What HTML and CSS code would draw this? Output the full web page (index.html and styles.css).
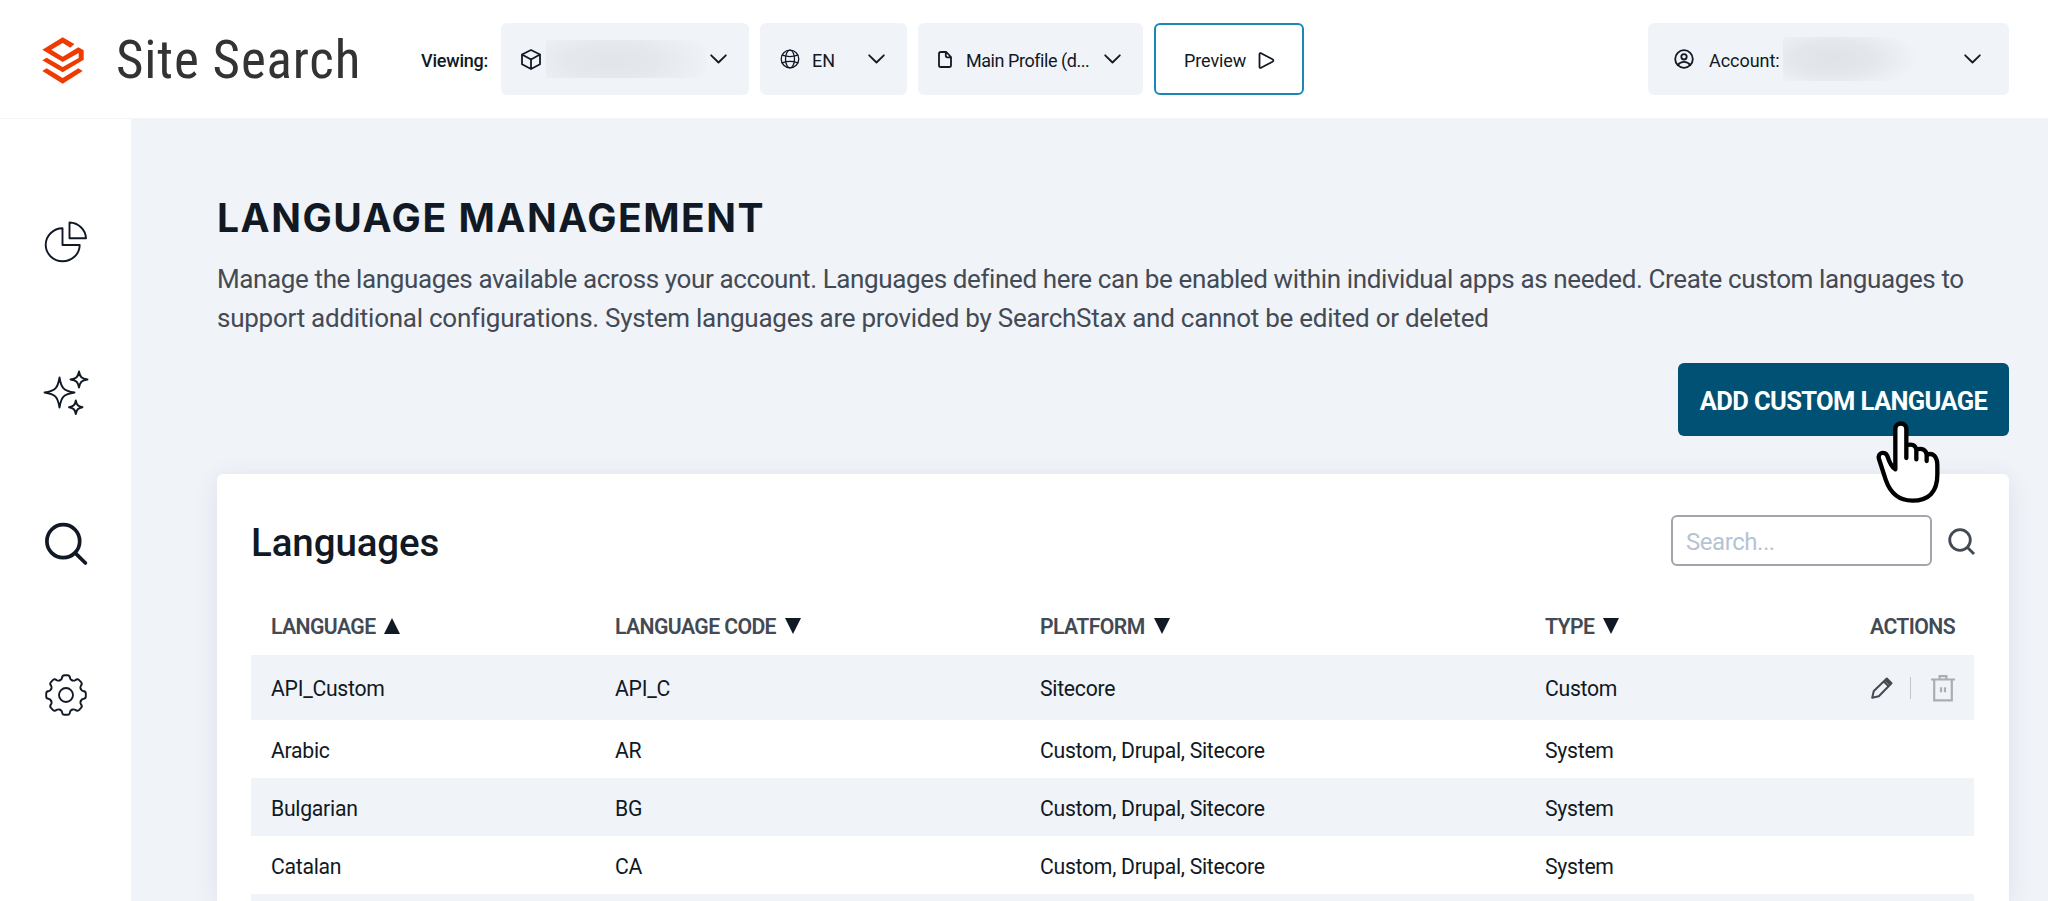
FILE: index.html
```html
<!DOCTYPE html>
<html lang="en">
<head>
<meta charset="utf-8">
<title>Site Search – Language Management</title>
<link rel="stylesheet" href="styles.css">
</head>
<body>
<header class="topbar">
  <svg class="logo" width="42" height="47" viewBox="126 112 126 141" fill="#ee3a03">
    <path d="M127 150 188 113 223 133 211 144 188 130 154 150 188 171 235 143 251 152V180L188 218 127 182 140 174 188 202 236 175V160L188 187Z"/>
    <path d="M127 214 140 206 188 235 235 206 248 214 188 252Z"/>
  </svg>
  <div class="brand">Site Search</div>
  <div class="viewing">Viewing:</div>
  <div class="controls">
    <div class="select select-app">
      <svg width="20" height="21" viewBox="0 0 20 21" class="ico"><path d="M10 1 19 5.500V15.200L10 20 1 15.200V5.500ZM1 5.500 10 10.500 19 5.500M10 10.500V20"/></svg>
      <span class="redacted redacted-app"></span>
      <svg class="chevron ico" width="17" height="10" viewBox="0 0 17 10"><path d="M1.200 1.300 8.500 8.500 15.800 1.300"/></svg>
    </div>
    <div class="select select-lang">
      <svg width="20" height="20" viewBox="0 0 20 20" class="ico thin"><circle cx="10" cy="10" r="8.800"/><ellipse cx="10" cy="10" rx="4.500" ry="8.800"/><path d="M2.200 6.200Q10 9 17.800 6.200M2.200 13.800Q10 11 17.800 13.800"/></svg>
      <span class="select-text">EN</span>
      <svg class="chevron ico" width="17" height="10" viewBox="0 0 17 10"><path d="M1.200 1.300 8.500 8.500 15.800 1.300"/></svg>
    </div>
    <div class="select select-profile">
      <svg width="14" height="17" viewBox="0 0 14 17" class="ico"><path d="M3 1H8.300L13 6V14.200Q13 16 11.200 16H2.800Q1 16 1 14.200V2.800Q1 1 3 1ZM7.800 1.200V4.800Q7.800 6.300 9.300 6.300H12.800"/></svg>
      <span class="select-text profile-text">Main Profile (d...</span>
      <svg class="chevron ico" width="17" height="10" viewBox="0 0 17 10"><path d="M1.200 1.300 8.500 8.500 15.800 1.300"/></svg>
    </div>
    <button class="preview">
      <span>Preview</span>
      <svg width="17" height="17" viewBox="0 0 17 17" class="ico"><path d="M1.500 2.200Q1.500.700 3 1.200L14.500 7.300Q16.300 8.500 14.500 9.700L3 15.800Q1.500 16.300 1.500 14.800Z"/></svg>
    </button>
  </div>
  <div class="select select-account">
    <svg width="20" height="20" viewBox="0 0 20 20" class="ico"><circle cx="10" cy="10" r="8.800"/><circle cx="10" cy="7.800" r="2.700"/><path d="M3.800 16Q6 12.800 10 12.800T16.200 16"/></svg>
    <span class="select-text">Account:</span>
    <span class="redacted redacted-account"></span>
    <svg class="chevron ico" width="17" height="10" viewBox="0 0 17 10"><path d="M1.200 1.300 8.500 8.500 15.800 1.300"/></svg>
  </div>
</header>
<div class="shell">
  <nav class="sidebar">
    <svg width="46" height="46" viewBox="-23 -23 46 46" class="nav-ico"><path d="M-3.500-13.700V3H13.700A17 16.500 0 1 1-3.500-13.700ZM3.500-19.500A17 16.500 0 0 1 20-3.700H3.500Z"/></svg>
    <svg width="46" height="46" viewBox="-23 -23 46 46" class="nav-ico"><path d="M-6.500-15.500C-4.800-5-2.500-2 8.500-.500C-2.500 1-4.800 4-6.500 14.500C-8.200 4-10.500 1-21.500-.500C-10.500-2-8.200-5-6.500-15.500Z"/><path d="M13-21.500C14-16 15.500-14.500 21.500-13.500C15.500-12.500 14-11 13-5.500C12-11 10.500-12.500 4.500-13.500C10.500-14.500 12-16 13-21.500Z"/><path d="M9.800 7.500C10.600 12 12 13.500 16.500 14.200C12 15 10.600 16.500 9.800 21C9 16.500 7.600 15 3 14.200C7.600 13.500 9 12 9.800 7.500Z"/></svg>
    <svg width="46" height="46" viewBox="-23 -23 46 46" class="nav-ico active"><ellipse cx="-2.700" cy="-2.800" rx="16.400" ry="16.500"/><path d="M9.600 9.400 19.400 19"/></svg>
    <svg width="46" height="46" viewBox="-23 -23 46 46" class="nav-ico"><defs><path id="tooth" d="M-6.100-14.700C-4.900-15.200-4.200-15.700-4-17C-3.800-19.300-3-19.800-1.500-19.800H1.500C3-19.800 3.800-19.300 4-17C4.200-15.700 4.900-15.200 6.100-14.700"/></defs><use href="#tooth"/><use href="#tooth" transform="rotate(45)"/><use href="#tooth" transform="rotate(90)"/><use href="#tooth" transform="rotate(135)"/><use href="#tooth" transform="rotate(180)"/><use href="#tooth" transform="rotate(225)"/><use href="#tooth" transform="rotate(270)"/><use href="#tooth" transform="rotate(315)"/><circle r="7"/></svg>
  </nav>
  <main class="main">
    <h1 class="page-title">LANGUAGE MANAGEMENT</h1>
    <p class="intro"><span class="intro-first">Manage the languages available across your account. Languages defined here can be enabled within individual apps as needed. Create custom languages to</span><br><span class="intro-second">support additional configurations. System languages are provided by SearchStax and cannot be edited or deleted</span></p>
    <div class="page-actions">
      <button class="add-button">ADD CUSTOM LANGUAGE
        <svg class="cursor" width="70" height="88" viewBox="700 235 210 264"><path d="M767 389V268C767 246 800 246 800 268V318C814 311 828 316 830 330C846 324 859 330 861 345C880 338 893 350 893 378V405C893 455 868 483 818 483C775 483 750 455 738 420L718 358C712 338 737 333 743 349C750 370 757 384 767 389ZM800 318V355M830 330V359M861 345V364"/></svg>
      </button>
    </div>
    <section class="card">
      <div class="card-head">
        <h2 class="card-title">Languages</h2>
        <div class="search">
          <input class="search-input" type="text" placeholder="Search...">
          <svg width="28" height="28" viewBox="0 0 28 28" class="search-ico"><circle cx="12" cy="12" r="10.300"/><path d="M19 19 26 26"/></svg>
        </div>
      </div>
      <div class="table">
        <div class="row head">
          <span>LANGUAGE<svg class="sort" width="16" height="16" viewBox="0 0 16 16"><path d="M0 16 8 0 16 16Z"/></svg></span>
          <span>LANGUAGE CODE<svg class="sort" width="16" height="16" viewBox="0 0 16 16"><path d="M0 0H16L8 16Z"/></svg></span>
          <span>PLATFORM<svg class="sort" width="16" height="16" viewBox="0 0 16 16"><path d="M0 0H16L8 16Z"/></svg></span>
          <span>TYPE<svg class="sort" width="16" height="16" viewBox="0 0 16 16"><path d="M0 0H16L8 16Z"/></svg></span>
          <span class="actions">ACTIONS</span>
        </div>
        <div class="row tall shaded">
          <span>API_Custom</span><span>API_C</span><span>Sitecore</span><span>Custom</span>
          <span class="actions">
            <svg width="22" height="22" viewBox="0 0 22 22" class="edit"><path d="M1.200 20.800 2.800 14 15.800 1.500 20.500 6.200 7.800 19.200ZM12.800 4.500 17.400 9.100M15 3.500 18.500 7"/></svg>
            <i class="divider"></i>
            <svg width="24" height="27" viewBox="0 0 24 27" class="trash"><path d="M0 4.500H24M3.200 4.500V25.300H20.800V4.500M8.600 4V1.200H15.400V4M10 12.200V17.200M14 12.200V17.200"/></svg>
          </span>
        </div>
        <div class="row"><span>Arabic</span><span>AR</span><span>Custom, Drupal, Sitecore</span><span>System</span></div>
        <div class="row shaded"><span>Bulgarian</span><span>BG</span><span>Custom, Drupal, Sitecore</span><span>System</span></div>
        <div class="row"><span>Catalan</span><span>CA</span><span>Custom, Drupal, Sitecore</span><span>System</span></div>
        <div class="row shaded cut"></div>
      </div>
    </section>
  </main>
</div>
</body>
</html>
```
FILE: styles.css
```css
* { box-sizing: border-box; }

body {
  margin: 0;
  height: 901px;
  overflow: hidden;
  background: #fff;
  color: #111924;
  font-family: Roboto, "Liberation Sans", sans-serif;
}

button, input { font-family: inherit; color: inherit; }

/* Top bar */
.topbar {
  display: flex;
  align-items: center;
  height: 119px;
  padding: 0 39px 0 42px;
  border-bottom: 1px solid #f4f5f8;
}
.logo { flex: none; margin-top: 3px; }
.brand {
  width: 301px;
  margin: 2px 0 0 32px;
  font-size: 53px;
  font-stretch: 85%;
  line-height: 72px;
  letter-spacing: 0.85px;
  color: #333;
}
.viewing {
  width: 84px;
  margin: 2px 0 0 4px;
  font-size: 18px;
  font-weight: 500;
  letter-spacing: -0.2px;
}
.controls { display: flex; gap: 11px; margin-right: auto; margin-left: -4px; }
.select {
  display: flex;
  align-items: center;
  height: 72px;
  padding: 0 22px 0 20px;
  background: #f0f3f8;
  border-radius: 6px;
  font-size: 18px;
}
.ico {
  flex: none;
  fill: none;
  stroke: #111924;
  stroke-width: 1.8;
  stroke-linecap: round;
  stroke-linejoin: round;
}
.ico.thin { stroke-width: 1.3; }
.chevron { margin-left: auto; }
.select-text { margin: 2px 0 0 15px; letter-spacing: 0; white-space: nowrap; }
.select-app { width: 248px; }
.select-lang { width: 147px; }
.select-lang .select-text { margin-left: 12px; }
.select-profile { width: 225px; padding-left: 20px; }
.profile-text { margin-left: 14px; letter-spacing: -0.45px; }
.preview {
  display: flex;
  align-items: center;
  gap: 12px;
  width: 150px;
  height: 72px;
  padding: 2px 0 0 28px;
  background: #fff;
  border: 2px solid #1b87b6;
  border-radius: 6px;
  font-size: 18px;
  letter-spacing: -0.1px;
}
.select-account { width: 361px; padding: 0 28px 0 26px; }
.select-account .select-text { letter-spacing: -0.05px; }

.redacted { flex: none; }
.redacted-app {
  width: 160px;
  height: 38px;
  margin-left: 5px;
  background: radial-gradient(ellipse 105px 40px at 42% 55%, #e1e4e9, #e5e8ed 45%, rgba(240, 243, 248, 0));
}
.redacted-account {
  width: 144px;
  height: 44px;
  margin-left: 3px;
  background: radial-gradient(ellipse 85px 34px at 35% 48%, #dfe2e7, #e3e6eb 45%, rgba(240, 243, 248, 0));
}

/* Shell */
.shell { display: flex; height: 782px; }
.sidebar {
  display: flex;
  flex: none;
  flex-direction: column;
  align-items: center;
  gap: 105px;
  width: 131px;
  padding-top: 100px;
}
.nav-ico {
  flex: none;
  fill: none;
  stroke: #111924;
  stroke-width: 1.9;
  stroke-linecap: round;
  stroke-linejoin: round;
}
.nav-ico.active { stroke-width: 3.7; }

.main {
  flex: 1;
  min-width: 0;
  padding: 79px 39px 0 86px;
  background: #f0f3f8;
}
.page-title {
  margin: 0;
  font-family: Inter, sans-serif;
  font-size: 39px;
  font-weight: 700;
  line-height: 40px;
  letter-spacing: 1.53px;
}
.intro {
  margin: 22px 0 0;
  font-size: 26px;
  line-height: 39px;
  color: #434a54;
  white-space: nowrap;
}
.intro-first { letter-spacing: -0.38px; }
.intro-second { letter-spacing: -0.26px; }

.page-actions { display: flex; justify-content: flex-end; margin-top: 25px; }
.add-button {
  position: relative;
  width: 331px;
  height: 73px;
  padding: 2px 0 0;
  background: #005173;
  border: 0;
  border-radius: 6px;
  color: #fff;
  font-size: 25.500px;
  font-weight: 700;
  letter-spacing: -0.62px;
}
.cursor {
  position: absolute;
  top: 55px;
  left: 195px;
  fill: #fff;
  stroke: #000;
  stroke-width: 13;
  stroke-linecap: round;
  stroke-linejoin: round;
}

/* Languages card */
.card {
  height: 427px;
  margin-top: 38px;
  padding: 41px 35px 0 34px;
  background: #fff;
  border-radius: 6px 6px 0 0;
  box-shadow: 0 4px 24px rgba(60, 70, 110, 0.1);
}
.card-head { display: flex; align-items: center; justify-content: space-between; }
.card-title {
  margin: 4px 0 0;
  font-size: 38.500px;
  font-weight: 500;
  line-height: 47px;
  letter-spacing: -0.1px;
}
.search { display: flex; align-items: center; gap: 16px; }
.search-input {
  width: 261px;
  height: 51px;
  padding: 2px 13px 0;
  background: #fff;
  border: 2px solid #a2a5ac;
  border-radius: 6px;
  font-size: 24px;
  letter-spacing: -0.45px;
}
.search-input::placeholder { color: #b6c3d4; opacity: 1; }
.search-ico {
  margin: 3px -2px 0 0;
  fill: none;
  stroke: #434a54;
  stroke-width: 2.800;
}

.table { margin-top: 32px; font-size: 21.200px; letter-spacing: -0.27px; }
.row {
  display: grid;
  grid-template-columns: 344px 425px 505px 200px 1fr;
  align-items: center;
  height: 58px;
  padding: 2px 19px 0 20px;
}
.row.shaded { background: #f0f3f8; }
.row.tall { height: 65px; padding-top: 1px; }
.row.cut { height: 7px; }
.row.head { height: 57px; padding-top: 0; font-weight: 600; letter-spacing: -0.6px; color: #434a54; }
.sort { margin-left: 9px; fill: #111924; vertical-align: 0; }
.actions { display: flex; align-items: center; justify-content: flex-end; }
.edit { fill: none; stroke: #434a54; stroke-width: 2; stroke-linejoin: round; }
.divider { width: 1px; height: 22px; margin: 0 20px 0 17px; background: #c3c7cd; }
.trash { fill: none; stroke: #aaaeb3; stroke-width: 2.200; }
```
